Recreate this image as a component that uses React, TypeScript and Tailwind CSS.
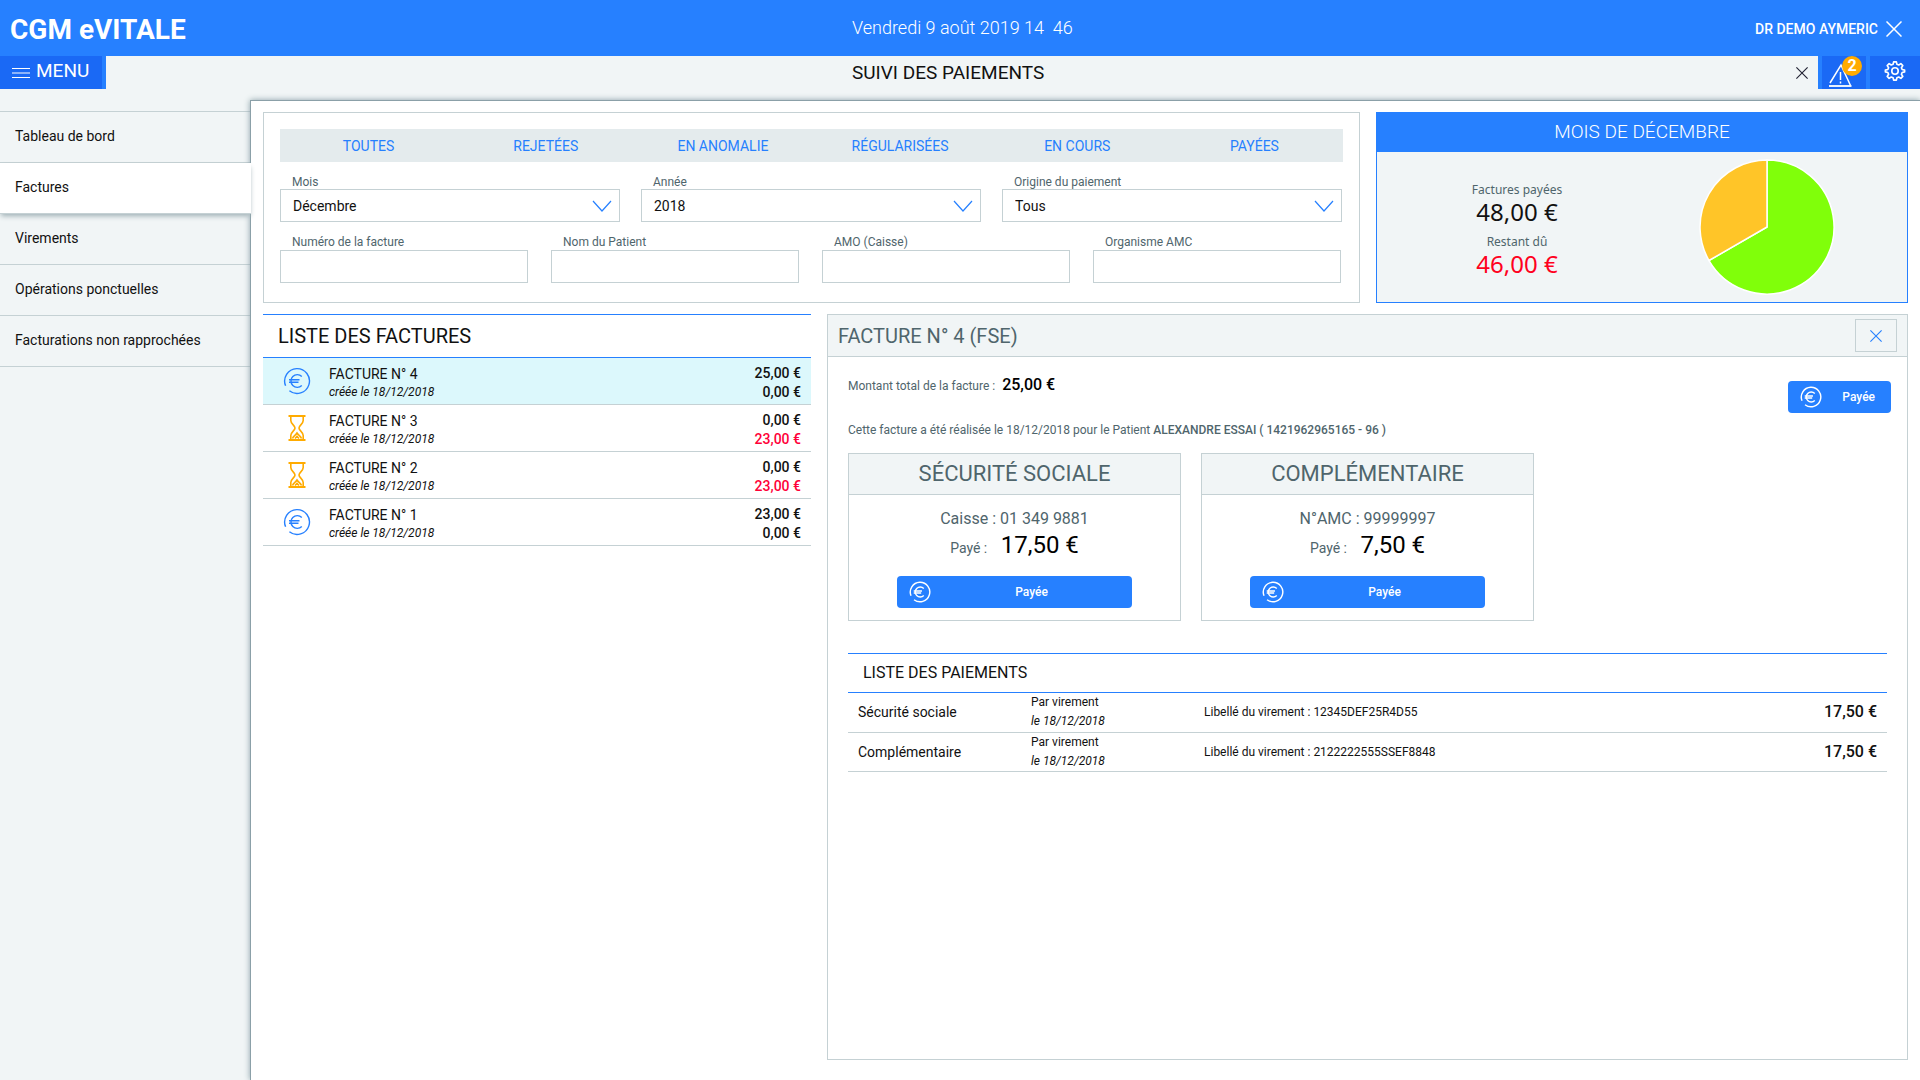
import { useState } from "react"

const tabs = ["TOUTES", "REJETÉES", "EN ANOMALIE", "RÉGULARISÉES", "EN COURS", "PAYÉES"]

const menuItems = [
  "Tableau de bord",
  "Factures",
  "Virements",
  "Opérations ponctuelles",
  "Facturations non rapprochées",
]

const selects = [
  { id: "mois", label: "Mois", options: ["Décembre", "Novembre", "Octobre"] },
  { id: "annee", label: "Année", options: ["2018", "2019"] },
  { id: "origine", label: "Origine du paiement", options: ["Tous", "AMO", "AMC"] },
]

const inputs = [
  { id: "numero", label: "Numéro de la facture" },
  { id: "patient", label: "Nom du Patient" },
  { id: "amo", label: "AMO (Caisse)" },
  { id: "amc", label: "Organisme AMC" },
]

const invoices = [
  { id: 4, paid: true, received: "25,00 €", due: "0,00 €" },
  { id: 3, paid: false, received: "0,00 €", due: "23,00 €" },
  { id: 2, paid: false, received: "0,00 €", due: "23,00 €" },
  { id: 1, paid: true, received: "23,00 €", due: "0,00 €" },
]

const payers = [
  { title: "SÉCURITÉ SOCIALE", ref: "Caisse : 01 349 9881", amount: "17,50 €" },
  { title: "COMPLÉMENTAIRE", ref: "N°AMC : 99999997", amount: "7,50 €" },
]

const payments = [
  { from: "Sécurité sociale", label: "12345DEF25R4D55", amount: "17,50 €" },
  { from: "Complémentaire", label: "2122222555SSEF8848", amount: "17,50 €" },
]

const EuroIcon = ({ className, stroke = 1.4 }: { className?: string; stroke?: number }) => (
  <svg viewBox="0 0 28 28" fill="none" stroke="currentColor" strokeWidth={stroke} className={className} aria-hidden="true">
    <path d="M2.600 18.800A12.400 12.400 0 1 1 6.400 23.800" />
    <path d="M18.800 9.400A6.400 6.400 0 1 0 18.800 18.600" />
    <path d="M6 12.800h10.500M6 15.200h9.500" />
  </svg>
)

const HourglassIcon = ({ className }: { className?: string }) => (
  <svg viewBox="0 0 20 28" fill="none" stroke="currentColor" className={className} aria-hidden="true">
    <path d="M1.500 2h17M1.500 26h17" strokeWidth="1.800" />
    <path d="M3.800 2.500v4c0 3.500 4.200 5 4.200 7.500s-4.200 4-4.200 7.500v4M16.200 2.500v4c0 3.500-4.200 5-4.200 7.500s4.200 4 4.200 7.500v4" strokeWidth="1.600" />
    <path d="M5.500 24.500c.8-3 3-3 4.500-5.500 1.500 2.500 3.700 2.500 4.500 5.500M8 24.500l2-2 2 2" strokeWidth="1.600" />
  </svg>
)

const CrossIcon = ({ className }: { className?: string }) => (
  <svg viewBox="0 0 16 16" fill="none" stroke="currentColor" strokeWidth="1.500" className={className} aria-hidden="true">
    <path d="M.5.5l15 15M15.500.5l-15 15" />
  </svg>
)

const WarningIcon = () => (
  <svg viewBox="0 0 26 26" fill="none" stroke="currentColor" className="mt-1 size-[26px]" aria-hidden="true">
    <path d="M2 21L13 3l9.500 20.500" strokeWidth="1.500" />
    <path d="M1 24h22.500" strokeWidth="1.800" />
    <path d="M12.500 10v8M12.500 19.500v2" strokeWidth="1.500" />
  </svg>
)

const GearIcon = () => (
  <svg viewBox="0 0 24 24" fill="none" stroke="currentColor" strokeWidth="1.800" strokeLinejoin="round" className="mb-1 size-[22px]" aria-hidden="true">
    <circle cx="12" cy="12" r="3.500" />
    <path d="M10.500 2h3l.6 2.700 2 .8 2.300-1.500 2.100 2.100L19 8.400l.8 2 2.700.6v2l-2.700.6-.8 2 1.500 2.300-2.100 2.100-2.300-1.500-2 .8-.6 2.700h-3l-.6-2.700-2-.8L5.600 20l-2.100-2.100L5 15.600l-.8-2L1.500 13v-2l2.700-.6.8-2-1.500-2.300L5.600 4l2.300 1.500 2-.8z" />
  </svg>
)

const Header = () => (
  <header className="flex h-14 items-center bg-[#2680ff] px-[18px] text-white">
    <div className="-ml-2 flex-1 pt-1 text-[28px] font-bold">CGM eVITALE</div>
    <time className="w-[208px] text-lg font-light whitespace-nowrap">Vendredi 9 août 2019 14&nbsp; 46</time>
    <div className="flex flex-1 items-center justify-end gap-2 pt-0.5 text-sm font-medium">
      DR DEMO AYMERIC
      <button aria-label="Déconnexion">
        <CrossIcon className="size-4" />
      </button>
    </div>
  </header>
)

const SubHeader = () => (
  <div className="flex h-11 items-start">
    <div className="flex-1">
      <button className="flex h-[33px] w-[106px] items-center gap-1.5 border-r-4 border-[#2680ff] bg-[#1a69f5] pb-0.5 pl-3 text-[19px] text-white">
        <svg viewBox="0 0 18 12" stroke="currentColor" className="mt-0.5 h-3 w-[18px]" aria-hidden="true">
          <path d="M0 1.500h18M0 6h18M0 10.500h18" />
        </svg>
        MENU
      </button>
    </div>
    <h1 className="w-[216px] pt-[3px] text-[19px] text-[#111]">SUIVI DES PAIEMENTS</h1>
    <div className="flex flex-1 justify-end">
      <button aria-label="Fermer l'onglet" className="flex h-[33px] w-8 items-center justify-center text-[#223]">
        <CrossIcon className="size-3" />
      </button>
      <button aria-label="Alertes" className="relative flex h-[33px] w-[52px] items-center border-x-4 border-[#2680ff] bg-[#1a69f5] pl-1.5 text-white">
        <WarningIcon />
        <span className="absolute top-0 right-1 flex size-5 items-center justify-center rounded-full bg-[#ffab00] text-base leading-5 font-bold">2</span>
      </button>
      <button aria-label="Paramètres" className="flex h-[33px] w-[50px] items-center justify-center bg-[#1a69f5] text-white">
        <GearIcon />
      </button>
    </div>
  </div>
)

const Sidebar = ({ active }: { active: string }) => (
  <nav className="w-[250px] shrink-0 pt-[11px]">
    <ul className="border-t border-[#c5d1d4]">
      {menuItems.map((item) => (
        <li key={item}>
          <a
            href="#"
            className={`flex h-[51px] items-center border-b border-[#c5d1d4] px-[15px] pb-[3px] text-sm text-[#111] ${
              item === active ? "relative z-10 -mr-px bg-white shadow-[0_3px_5px_-1px_#9fb0b5]" : ""
            }`}
          >
            {item}
          </a>
        </li>
      ))}
    </ul>
  </nav>
)

const Filters = () => {
  const [tab, setTab] = useState("")
  return (
    <section className="flex-1 border border-[#c5d1d4] px-4 pt-4 pb-[19px]">
      <div className="grid h-[33px] grid-cols-6 bg-[#e4ebed]">
        {tabs.map((name) => (
          <button
            key={name}
            onClick={() => setTab(name)}
            className={`text-sm text-[#2680ff] ${name === tab ? "underline" : ""}`}
          >
            {name}
          </button>
        ))}
      </div>
      <div className="mt-3 mr-px grid grid-cols-3 gap-[21px]">
        {selects.map((field) => (
          <div key={field.id} className="relative">
            <label htmlFor={field.id} className="block h-[15px] pl-3 text-xs text-[#4f656c]">
              {field.label}
            </label>
            <select id={field.id} className="h-[33px] w-full appearance-none border border-[#c5d1d4] bg-white px-3 text-sm text-[#111]">
              {field.options.map((option) => (
                <option key={option}>{option}</option>
              ))}
            </select>
            <svg viewBox="0 0 20 12" fill="none" stroke="#2680ff" strokeWidth="1.200" className="pointer-events-none absolute right-2 bottom-2.5 h-3 w-5" aria-hidden="true">
              <path d="M1 1l9 10 9-10" />
            </svg>
          </div>
        ))}
      </div>
      <div className="mt-3 mr-0.5 grid grid-cols-4 gap-[23px]">
        {inputs.map((field) => (
          <div key={field.id}>
            <label htmlFor={field.id} className="block h-4 pl-3 text-xs text-[#4f656c]">
              {field.label}
            </label>
            <input id={field.id} type="text" className="h-[33px] w-full border border-[#c5d1d4] bg-white px-3 text-sm" />
          </div>
        ))}
      </div>
    </section>
  )
}

const MonthCard = () => (
  <section className="flex w-[532px] flex-col border border-[#2680ff]">
    <h2 className="flex h-[39px] items-center justify-center bg-[#2680ff] text-[19px] font-light text-white">MOIS DE DÉCEMBRE</h2>
    <div className="flex flex-1 items-center bg-[#f1f5f6] pr-[30px] font-['Noto_Sans',sans-serif]">
      <dl className="w-[280px] pt-1.5 text-center">
        <dt className="text-xs text-[#4f656c]">Factures payées</dt>
        <dd className="mb-2 text-2xl leading-7 text-[#111]">48,00 €</dd>
        <dt className="text-xs text-[#4f656c]">Restant dû</dt>
        <dd className="text-2xl leading-7 text-[#ff0020]">46,00 €</dd>
      </dl>
      <div className="flex flex-1 justify-center">
        <svg viewBox="-68 -68 136 136" className="size-[136px]" stroke="#fff" strokeWidth="1.500" aria-hidden="true">
          <path d="M0 0V-67A67 67 0 1 1 -58 33.500Z" fill="#80ff0a" />
          <path d="M0 0L-58 33.500A67 67 0 0 1 0 -67Z" fill="#ffc528" />
        </svg>
      </div>
    </div>
  </section>
)

const InvoiceList = ({ selected }: { selected: number }) => (
  <section className="w-[548px] shrink-0">
    <h2 className="flex h-11 items-center border-y border-[#2680ff] px-[15px] text-xl text-[#111]">LISTE DES FACTURES</h2>
    <ul>
      {invoices.map((invoice) => (
        <li
          key={invoice.id}
          className={`flex h-[47px] items-center border-b border-[#c5d1d4] pr-2.5 pl-5 ${
            invoice.id === selected ? "bg-[#dcf8fc]" : ""
          }`}
        >
          <div className="flex w-[46px]">
            {invoice.paid ? <EuroIcon className="size-7 text-[#2680ff]" /> : <HourglassIcon className="h-7 w-7 text-[#ffab00]" />}
          </div>
          <div className="flex-1 pt-1 text-[#111]">
            <p className="text-sm leading-[18px]">FACTURE N° {invoice.id}</p>
            <p className="text-xs leading-[18px] italic">créée le 18/12/2018</p>
          </div>
          <div className="pt-[3px] text-right text-sm leading-[19px] font-medium text-[#111]">
            <p>{invoice.received}</p>
            <p className={invoice.paid ? "" : "text-[#ff0038]"}>{invoice.due}</p>
          </div>
        </li>
      ))}
    </ul>
  </section>
)

const InvoiceDetail = () => (
  <section className="flex-1 border border-[#c5d1d4]">
    <div className="flex h-[42px] items-center justify-between border-b border-[#c5d1d4] bg-[#f1f5f6] px-2.5">
      <h2 className="text-xl text-[#4f656c]">FACTURE N° 4 (FSE)</h2>
      <button aria-label="Fermer la facture" className="flex h-[33px] w-[42px] items-center justify-center border border-[#c5d1d4] text-[#2680ff]">
        <CrossIcon className="size-3" />
      </button>
    </div>
    <div className="pt-4 pr-4 pl-5 text-xs text-[#4f656c]">
      <div className="flex h-12 justify-between">
        <p>
          Montant total de la facture : <b className="ml-1 text-base font-medium text-black">25,00 €</b>
        </p>
        <button className="mt-2 flex h-8 w-[103px] items-center rounded bg-[#2680ff] pr-4 pl-3 text-white">
          <EuroIcon className="size-[22px]" stroke={1.8} />
          <span className="flex-1 text-right font-medium">Payée</span>
        </button>
      </div>
      <p className="mt-px">
        Cette facture a été réalisée le 18/12/2018 pour le Patient <b className="font-medium">ALEXANDRE ESSAI ( 1421962965165 - 96 )</b>
      </p>
      <div className="mt-[15px] flex gap-5">
        {payers.map((payer) => (
          <article key={payer.title} className="flex h-[168px] w-[333px] flex-col items-center border border-[#c5d1d4]">
            <h3 className="flex h-[41px] w-full items-center justify-center border-b border-[#c5d1d4] bg-[#f1f5f6] text-[22px]">{payer.title}</h3>
            <p className="mt-3 text-base">{payer.ref}</p>
            <p className="text-sm">
              Payé : <span className="ml-2.5 text-2xl leading-7 text-black">{payer.amount}</span>
            </p>
            <button className="mt-[17px] flex h-8 w-[235px] items-center rounded bg-[#2680ff] pl-3 text-white">
              <EuroIcon className="size-[22px]" stroke={1.8} />
              <span className="flex-1 text-center font-medium">Payée</span>
            </button>
          </article>
        ))}
      </div>
      <div className="mt-8 mr-1">
        <h3 className="flex h-10 items-center border-y border-[#2680ff] px-[15px] text-base text-[#111]">LISTE DES PAIEMENTS</h3>
        <table className="w-full text-[#111]">
          <tbody>
            {payments.map((payment) => (
              <tr key={payment.from} className="h-[39px] border-b border-[#c5d1d4]">
                <td className="w-[183px] pl-2.5 text-sm">{payment.from}</td>
                <td className="w-[173px] leading-[19px]">
                  Par virement
                  <br />
                  <i>le 18/12/2018</i>
                </td>
                <td>Libellé du virement : {payment.label}</td>
                <td className="pr-2.5 text-right text-base font-medium">{payment.amount}</td>
              </tr>
            ))}
          </tbody>
        </table>
      </div>
    </div>
  </section>
)

export default function App() {
  return (
    <div className="flex min-h-screen flex-col bg-[#f1f5f6] font-['Roboto',sans-serif]">
      <Header />
      <SubHeader />
      <div className="flex flex-1">
        <Sidebar active="Factures" />
        <main className="flex flex-1 flex-col gap-[11px] border-t border-l border-[#8ba0a8] bg-white pt-[11px] pr-3 pb-5 pl-3 shadow-[0_0_6px_#8ba0a8]">
          <div className="flex gap-4">
            <Filters />
            <MonthCard />
          </div>
          <div className="flex flex-1 gap-4">
            <InvoiceList selected={4} />
            <InvoiceDetail />
          </div>
        </main>
      </div>
    </div>
  )
}
